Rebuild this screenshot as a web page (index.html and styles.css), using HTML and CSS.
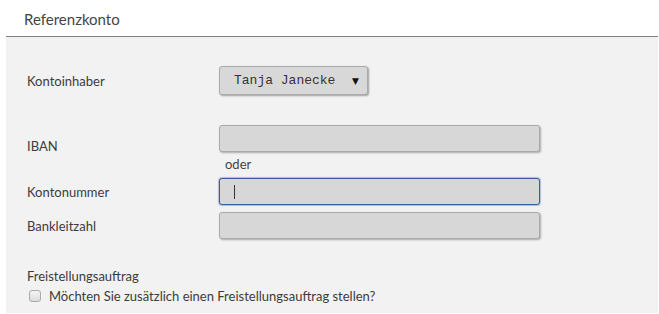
FILE: index.html
```html
<!DOCTYPE html>
<html lang="de">
<head>
  <meta charset="UTF-8" />
  <title>Referenzkonto</title>
  <link rel="stylesheet" href="styles.css">
</head>
<body>

  <div class="header">Referenzkonto</div>

  <div class="panel">
    <div class="row row-select">
      <label class="label">Kontoinhaber</label>
      <div class="select">
        <span>Tanja Janecke</span>
        <span class="arrow">&#9660;</span>
      </div>
    </div>

    <div class="row row-iban">
      <label class="label label-low">IBAN</label>
      <input type="text" class="field">
    </div>
    <div class="oder">oder</div>

    <div class="row">
      <label class="label">Kontonummer</label>
      <span class="field-wrap">
        <input type="text" class="field focused">
        <span class="caret"></span>
      </span>
    </div>

    <div class="row row-blz">
      <label class="label">Bankleitzahl</label>
      <input type="text" class="field">
    </div>

    <div class="fs-title">Freistellungsauftrag</div>
    <label class="check-row">
      <input type="checkbox" class="check">
      <span>Möchten Sie zusätzlich einen Freistellungsauftrag stellen?</span>
    </label>
  </div>

</body>
</html>
```

FILE: styles.css
```css
body {
  margin: 0;
  background: #fff;
  font-family: Lato, "Open Sans", sans-serif;
  color: #3c3c3c;
}
.header {
  height: 36px;
  line-height: 38px;
  padding-left: 24px;
  font-size: 15px;
  color: #444;
}
.panel {
  margin-left: 6px;
  margin-right: 1px;
  height: 277px;
  border-top: 1px solid #808080;
  background: #f2f2f2;
  padding: 29px 0 0 21px;
  box-sizing: border-box;
  font-size: 13px;
}
.row {
  display: flex;
  align-items: center;
}
.label {
  width: 192px;
  flex: none;
  line-height: 16px;
}
.select {
  width: 149px;
  height: 29px;
  box-sizing: border-box;
  display: flex;
  align-items: center;
  justify-content: space-between;
  padding: 0 8px 0 14px;
  background: #d8d8d8;
  border: 1px solid #aaa;
  border-radius: 3px;
  box-shadow: 1px 1px 2px rgba(0, 0, 0, 0.35);
  font-family: "Liberation Mono", monospace;
  font-size: 13px;
  color: #333;
}
.arrow {
  font-family: "DejaVu Sans", sans-serif;
  font-size: 9px;
  color: #111;
}
.row-iban {
  margin-top: 30px;
  align-items: flex-start;
}
.label-low {
  margin-top: 13px;
}
.field {
  width: 321px;
  height: 27px;
  box-sizing: border-box;
  margin: 0;
  background: #d7d7d7;
  border: 1px solid #aaa;
  border-radius: 3px;
  box-shadow: 1px 1px 2px rgba(0, 0, 0, 0.3);
  outline: none;
}
.field.focused {
  border-color: #3a5c9c;
  box-shadow: 0 0 1px 1px rgba(58, 92, 156, 0.35);
}
.field-wrap {
  position: relative;
  display: block;
}
.caret {
  position: absolute;
  left: 15px;
  top: 7px;
  width: 1px;
  height: 14px;
  background: #333;
}
.oder {
  margin: 2px 0 6px 198px;
  line-height: 16px;
  height: 16px;
  color: #444;
}
.row-blz {
  margin-top: 7px;
}
.fs-title {
  margin-top: 29px;
  line-height: 16px;
}
.check-row {
  display: flex;
  align-items: center;
  margin-top: 4px;
  line-height: 16px;
}
.check {
  appearance: none;
  width: 12px;
  height: 12px;
  margin: 0 8px 0 2px;
  border: 1px solid #aaa;
  border-radius: 3px;
  background: linear-gradient(#f4f4f4, #dcdcdc);
}
```
